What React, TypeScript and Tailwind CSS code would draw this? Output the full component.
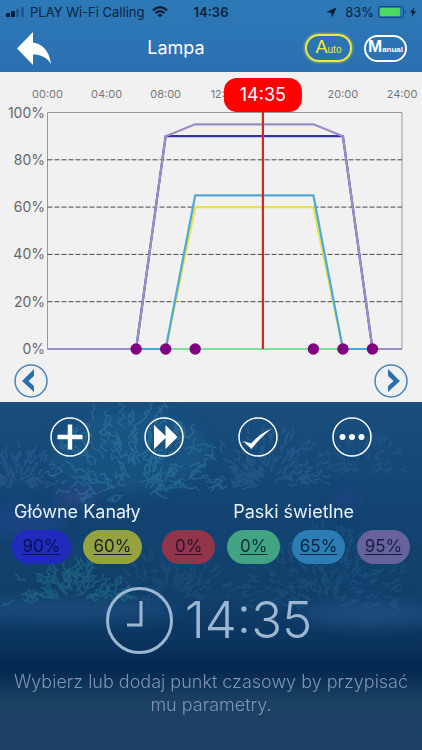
import React from 'react';

interface Channel {
  name: string;
  value: number;
  className: string;
}

interface Series {
  color: string;
  points: [number, number][];
}

const MAIN_CHANNELS: Channel[] = [
  { name: 'Kanał 1', value: 90, className: 'w-[59px] bg-[#202bbd] text-[#0a1150]' },
  { name: 'Kanał 2', value: 60, className: 'w-[59px] ml-3 bg-[#94a340] text-[#17202b]' },
  { name: 'Kanał 3', value: 0, className: 'w-[53px] ml-auto bg-[#90354a] text-[#2c1230]' },
];

const STRIP_CHANNELS: Channel[] = [
  { name: 'Pasek 1', value: 0, className: 'w-[53px] bg-[#42a482] text-[#0f2c3c]' },
  { name: 'Pasek 2', value: 65, className: 'w-[53px] bg-[#2c7db3] text-[#0c2244]' },
  { name: 'Pasek 3', value: 95, className: 'w-[53px] bg-[#66629c] text-[#1a1e46]' },
];

// [hour, percent]
const SERIES: Series[] = [
  { color: '#3a33b0', points: [[0, 0], [6, 0], [8, 90], [20, 90], [22, 0], [24, 0]] },
  { color: '#e8e34a', points: [[0, 0], [8, 0], [10, 60], [18, 60], [20, 0], [24, 0]] },
  { color: '#7ee09c', points: [[0, 0], [24, 0]] },
  { color: '#4ea9d6', points: [[6, 0], [8, 0], [10, 65], [18, 65], [20, 0], [22, 0]] },
  { color: '#9a8fc0', points: [[0, 0], [6, 0], [8, 90], [10, 95], [18, 95], [20, 90], [22, 0], [24, 0]] },
];

const TIME_POINTS = [6, 8, 10, 18, 20, 22];
const NOW = 14 + 35 / 60;

// hours whose label would sit fully under the time marker are left out
const HOUR_LABELS = [0, 4, 8, 12, 16, 20, 24].filter((h) => Math.abs(h - NOW) > 2);

const hourX = (h: number) => 47.5 + (h / 24) * 354.5;
const percentY = (p: number) => 277 - (p / 100) * 236.5;
const pad = (n: number) => String(n).padStart(2, '0');

function StatusBar() {
  return (
    <div className="flex h-6 items-center px-1.5 text-[13px] leading-4 text-[#0b2440]">
      <div className="flex flex-1 items-center">
        <svg width="18" height="10" viewBox="0 0 18 10" className="mr-1.5">
          <rect x="0" y="6" width="4" height="4" rx="1" fill="#061a30" />
          <rect x="5" y="4" width="4" height="6" rx="1" fill="#061a30" />
          <rect x="10" y="2" width="3" height="8" rx="1" fill="#1f5a8e" />
          <rect x="15" y="0" width="3" height="10" rx="1" fill="#1f5a8e" />
        </svg>
        <span className="whitespace-nowrap">PLAY Wi-Fi Calling</span>
        <svg width="16" height="12" viewBox="0 0 16 12" className="ml-2" fill="none" stroke="#061a30" strokeWidth="2">
          <path d="M1 4.5C5 .3 11 .3 15 4.5" />
          <path d="M3.7 7.2C6.3 4.7 9.7 4.7 12.3 7.2" />
          <path d="M5.7 9L8 11.5L10.3 9C9 7.8 7 7.8 5.7 9Z" fill="#061a30" stroke="none" />
        </svg>
      </div>
      <span className="font-semibold">14:36</span>
      <div className="flex flex-1 items-center justify-end">
        <svg width="11" height="11" viewBox="0 0 11 11" className="mr-2">
          <path d="M10.5.5L6 10.5L5.3 5.7L.5 5Z" fill="#061a30" />
        </svg>
        <span>83%</span>
        <svg width="28" height="12" viewBox="0 0 28 12" className="ml-1">
          <rect x=".5" y=".5" width="25" height="11" rx="2.5" fill="none" stroke="#174a78" />
          <rect x="2" y="2" width="20" height="8" rx="1" fill="#4bd964" />
          <path d="M27 4C28.3 5 28.3 7 27 8Z" fill="#174a78" />
        </svg>
        <svg width="6" height="10" viewBox="0 0 6 10" className="ml-1">
          <path d="M4.5 0L0 5.6H2.6L1.5 10L6 4.2H3.3Z" fill="#061a30" />
        </svg>
      </div>
    </div>
  );
}

function NavBar() {
  return (
    <div className="flex h-12 items-center pr-[15px] pl-[17px] text-white">
      <button aria-label="Wstecz">
        <svg width="34" height="33" viewBox="0 0 34 33" className="block">
          <path d="M0 16.5L16 0V10.5C25 11.5 32.5 19 34 32C29.5 25 24 22.5 16 22.5V33Z" fill="#fff" />
        </svg>
      </button>
      <h1 className="flex-1 pr-1 text-center text-[18px] leading-6">Lampa</h1>
      <button className="mr-3 h-7 w-[47px] rounded-full border-2 border-[#f0ea3c] font-['Liberation_Sans',sans-serif] text-[10px] leading-5 text-[#f0ea3c] shadow-[0_0_3px_#d6e05a]">
        <span className="text-[18px]">A</span>uto
      </button>
      <button className="h-[27px] w-[43px] rounded-full border-2 border-white font-['Liberation_Sans',sans-serif] text-[8px] leading-5 font-bold">
        <span className="text-[17px]">M</span>anual
      </button>
    </div>
  );
}

function Chart() {
  const x = hourX(NOW);
  return (
    <svg viewBox="0 0 422 292" className="block w-full font-['Inter',sans-serif]" role="img" aria-label="Lampa">
      {HOUR_LABELS.map((h) => (
        <text key={h} x={hourX(h)} y="26" textAnchor="middle" fontSize="11" fill="#777">
          {pad(h)}:00
        </text>
      ))}
      {[0, 20, 40, 60, 80, 100].map((p) => (
        <text key={p} x="45" y={percentY(p) + 5} textAnchor="end" fontSize="14" fill="#666">
          {p}%
        </text>
      ))}
      <path d="M47.5 277V40.5H402V277" fill="none" stroke="#999" />
      {[20, 40, 60, 80].map((p) => (
        <line key={p} x1="47.5" x2="402" y1={percentY(p)} y2={percentY(p)} stroke="#484848" strokeDasharray="5 2" />
      ))}
      {SERIES.map((s) => (
        <polyline
          key={s.color}
          points={s.points.map(([h, p]) => `${hourX(h)},${percentY(p)}`).join(' ')}
          fill="none"
          stroke={s.color}
          strokeWidth="2.2"
          strokeLinejoin="round"
        />
      ))}
      {TIME_POINTS.map((h) => (
        <circle key={h} cx={hourX(h)} cy="277" r="5.7" fill="#800080" />
      ))}
      <line x1={x} x2={x} y1="30" y2="277" stroke="#e2231d" strokeWidth="2.2" />
      <rect x={x - 39} y="6" width="78" height="34" rx="13" fill="#fe0000" />
      <text x={x} y="29" textAnchor="middle" fontSize="18" fill="#fff">
        14:35
      </text>
    </svg>
  );
}

function PageButton({ label, d }: { label: string; d: string }) {
  return (
    <button aria-label={label}>
      <svg width="34" height="34" viewBox="0 0 34 34" className="block">
        <circle cx="17" cy="17" r="16" fill="none" stroke="#4a83b5" strokeWidth="1.5" />
        <path d={d} fill="#2b70ae" />
      </svg>
    </button>
  );
}

// small seeded generator so that the reef looks the same on every render
function random(seed: number) {
  let s = seed;
  return () => {
    s = (s * 16807) % 2147483647;
    return s / 2147483647;
  };
}

// short wavy twigs that fan out from the foot of the coral
function coral(cx: number, cy: number, rx: number, ry: number, count: number, size: number, seed: number) {
  const next = random(seed);
  let d = '';
  for (let i = 0; i < count; i++) {
    const a = Math.PI * (1 + next());
    const r = 0.15 + next() * 0.8;
    let x = cx + Math.cos(a) * r * rx;
    let y = cy + Math.sin(a) * r * ry;
    d += `M${x.toFixed(1)} ${y.toFixed(1)}`;
    for (let j = 0; j < 3; j++) {
      const turn = a + (next() - 0.5) * 1.8;
      x += Math.cos(turn) * size * 0.5;
      y += Math.sin(turn) * size * 0.5;
      d += `T${x.toFixed(1)} ${y.toFixed(1)}`;
    }
  }
  return d;
}

const CORALS = [
  { d: coral(135, 94, 85, 95, 130, 10, 11), color: '#3a8cb0', opacity: 0.38 },
  { d: coral(268, 84, 65, 58, 150, 5, 23), color: '#4480b0', opacity: 0.26 },
  { d: coral(20, 85, 50, 42, 150, 3, 37), color: '#4b73b0', opacity: 0.3 },
  { d: coral(365, 70, 40, 40, 70, 5, 41), color: '#3a70a8', opacity: 0.22 },
  { d: coral(70, 198, 62, 36, 90, 8, 53), color: '#2a8896', opacity: 0.38 },
  { d: coral(325, 205, 90, 85, 220, 5, 67), color: '#2f75a0', opacity: 0.25 },
  { d: coral(175, 198, 60, 55, 120, 5, 71), color: '#356d9e', opacity: 0.22 },
];

function Reef() {
  return (
    <svg
      className="absolute inset-0 h-full w-full"
      viewBox="0 0 422 348"
      preserveAspectRatio="xMidYMid slice"
      aria-hidden="true"
    >
      <defs>
        <linearGradient id="water" x2="0" y2="1">
          <stop offset="0" stopColor="#194e7d" />
          <stop offset=".35" stopColor="#124370" />
          <stop offset=".56" stopColor="#123f6b" />
          <stop offset=".66" stopColor="#0d3763" />
          <stop offset=".77" stopColor="#042950" />
          <stop offset=".86" stopColor="#1b4162" />
          <stop offset="1" stopColor="#1b3f66" />
        </linearGradient>
        <filter id="soft" x="-30%" y="-50%" width="160%" height="200%">
          <feGaussianBlur stdDeviation="7" />
        </filter>
        <filter id="haze">
          <feGaussianBlur stdDeviation=".5" />
        </filter>
      </defs>
      <rect width="422" height="348" fill="url(#water)" />
      <g filter="url(#soft)">
        <ellipse cx="130" cy="50" rx="80" ry="40" fill="#23709a" opacity=".25" />
        <ellipse cx="20" cy="120" rx="45" ry="15" fill="#2743a0" opacity=".4" />
        <ellipse cx="77" cy="94" rx="20" ry="6" fill="#4a4ba0" opacity=".6" />
        <ellipse cx="345" cy="98" rx="12" ry="9" fill="#3340a0" opacity=".4" />
        <ellipse cx="60" cy="208" rx="120" ry="12" fill="#2a5d92" opacity=".4" />
        <ellipse cx="370" cy="212" rx="70" ry="12" fill="#2a5d92" opacity=".5" />
      </g>
      <g fill="none" strokeWidth="1.6" strokeLinecap="round" filter="url(#haze)">
        {CORALS.map((c, i) => (
          <path key={i} d={c.d} stroke={c.color} opacity={c.opacity} />
        ))}
      </g>
    </svg>
  );
}

function ActionButton({ label, children }: { label: string; children: React.ReactNode }) {
  return (
    <button aria-label={label}>
      <svg width="40" height="40" viewBox="0 0 40 40" className="block" fill="#fff">
        <circle cx="20" cy="20" r="19" fill="none" stroke="#fff" strokeWidth="1.5" />
        {children}
      </svg>
    </button>
  );
}

function ChannelGroup({ title, channels, className }: { title: string; channels: Channel[]; className: string }) {
  return (
    <section className={className}>
      <h2 className="text-[18px] leading-6 whitespace-nowrap text-[#e8f0f8]">{title}</h2>
      <div className="mt-1.5 flex justify-between">
        {channels.map((c) => (
          <button
            key={c.name}
            aria-label={`${c.name}: ${c.value}%`}
            className={`h-[34px] rounded-full text-[17px] underline underline-offset-2 ${c.className}`}
          >
            {c.value}%
          </button>
        ))}
      </div>
    </section>
  );
}

export default function App() {
  return (
    <div className="flex min-h-screen flex-col bg-[#1b3f66] font-['Inter',sans-serif]">
      <header className="bg-linear-to-b from-[#2d79b7] to-[#2b70b0]">
        <StatusBar />
        <NavBar />
      </header>

      <div className="bg-[#f1f1f1]">
        <Chart />
        <div className="flex justify-between px-3.5 pb-1">
          <PageButton label="Poprzedni" d="M20 5V12L14.5 17L20 22V28L8 17Z" />
          <PageButton label="Następny" d="M14 5V12L19.5 17L14 22V28L26 17Z" />
        </div>
      </div>

      <main className="relative flex-1">
        <Reef />
        <div className="relative">
          <div className="flex justify-between px-[50px] pt-[15px]">
            <ActionButton label="Dodaj">
              <path d="M17.8 7.500H22.2V17.8H32.500V22.2H22.2V32.500H17.8V22.2H7.500V17.8H17.8Z" />
            </ActionButton>
            <ActionButton label="Podgląd">
              <path d="M10 8L21.5 19V8L33.5 20L21.5 32V21L10 32Z" />
            </ActionButton>
            <ActionButton label="Zatwierdź">
              <path d="M5 24L13 26.5C19 19.5 26 14.5 34 11.5C26 17.5 19.5 24 13.500 32Z" />
            </ActionButton>
            <ActionButton label="Więcej">
              <circle cx="10.5" cy="20" r="3" />
              <circle cx="20" cy="20" r="3" />
              <circle cx="29.5" cy="20" r="3" />
            </ActionButton>
          </div>

          <div className="mt-[43px] flex gap-3 px-3">
            <ChannelGroup title="Główne Kanały" channels={MAIN_CHANNELS} className="flex-10 [&>h2]:pl-0.5" />
            <ChannelGroup title="Paski świetlne" channels={STRIP_CHANNELS} className="flex-9 [&>h2]:pl-1.5" />
          </div>

          <div className="mt-[22px] flex items-center justify-center gap-3 pr-1 text-[#9db7d3]">
            <svg width="67" height="67" viewBox="0 0 67 67" fill="none" stroke="currentColor" strokeWidth="3">
              <circle cx="33.5" cy="33.5" r="32" />
              <path d="M35 14V38H21" />
            </svg>
            <time className="text-[51px] leading-[68px] font-light">14:35</time>
          </div>

          <p className="mt-4 px-2 pb-8 text-center text-[18px] leading-[23px] font-light text-[#7f94b2]">
            Wybierz lub dodaj punkt czasowy by przypisać mu parametry.
          </p>
        </div>
      </main>
    </div>
  );
}
